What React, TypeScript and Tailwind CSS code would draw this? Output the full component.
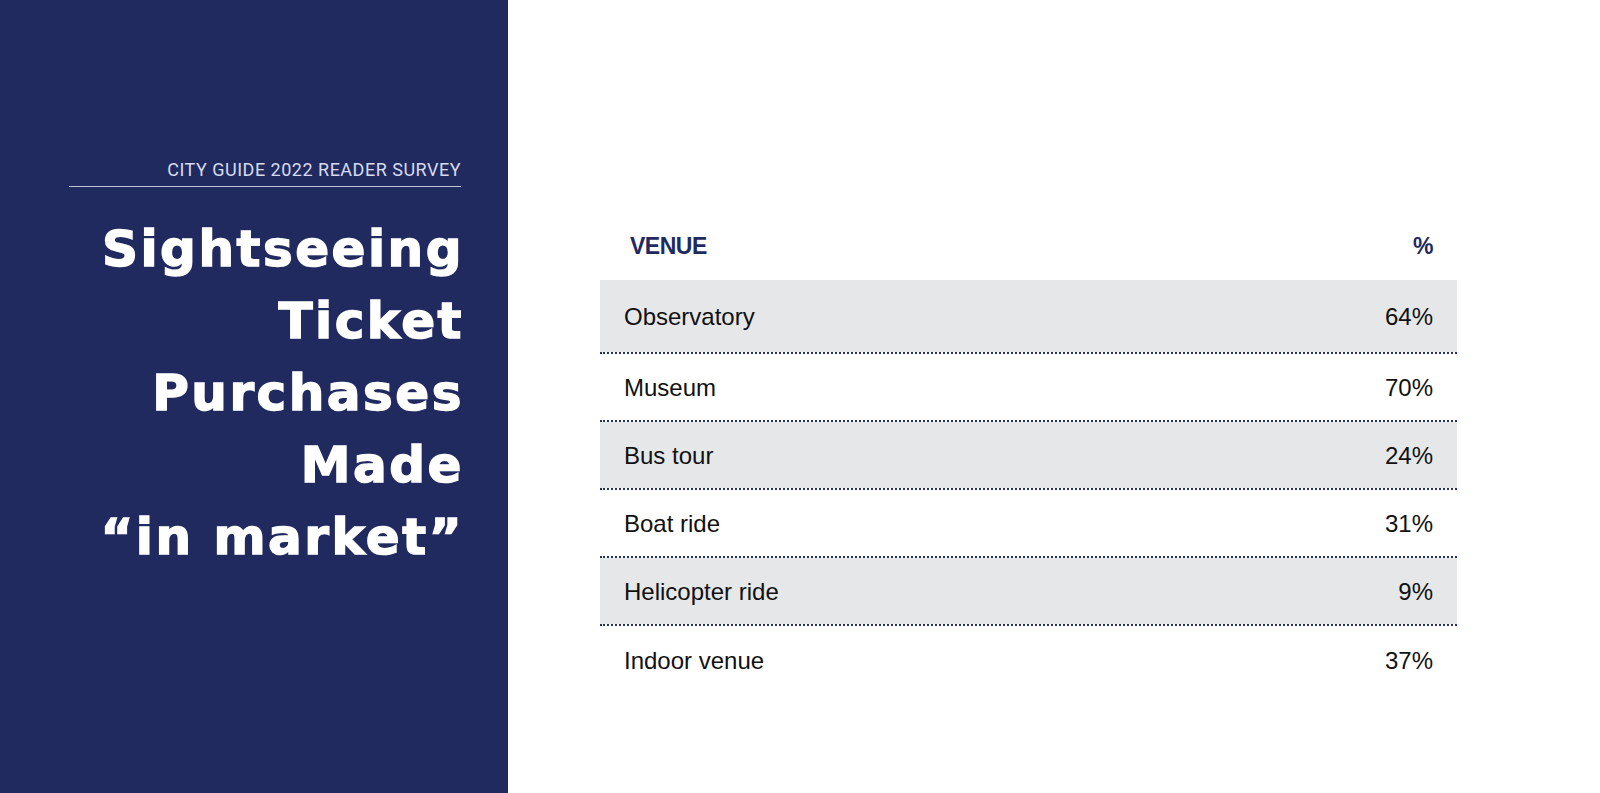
import React from "react";

const rows = [
  { venue: "Observatory", pct: "64%", shaded: true },
  { venue: "Museum", pct: "70%", shaded: false },
  { venue: "Bus tour", pct: "24%", shaded: true },
  { venue: "Boat ride", pct: "31%", shaded: false },
  { venue: "Helicopter ride", pct: "9%", shaded: true },
  { venue: "Indoor venue", pct: "37%", shaded: false },
];

export default function App() {
  return (
    <div className="flex w-[1600px] h-[793px] bg-white overflow-hidden">
      <div className="w-[508px] h-full shrink-0 bg-[#212a5f] flex flex-col items-end pr-[47px] pt-[159px]">
        <div
          className="w-[392px] text-right text-[18px] leading-[22px] tracking-[0.5px] text-[#d6dbef] pb-[5px] border-b border-[#c0c4dc]"
          style={{ fontFamily: "Roboto, 'Liberation Sans', sans-serif" }}
        >
          CITY GUIDE 2022 READER SURVEY
        </div>
        <h1
          className="mt-[26px] mr-[-3px] text-right text-white text-[50px] leading-[72px] font-bold tracking-[2.5px] [-webkit-text-stroke:1.5px_white]"
          style={{ fontFamily: "'DejaVu Sans', Verdana, sans-serif" }}
        >
          Sightseeing
          <br />
          Ticket
          <br />
          Purchases
          <br />
          Made
          <br />
          “in market”
        </h1>
      </div>
      <div className="flex-1 pl-[92px] pt-[224px]">
        <div className="w-[857px]" style={{ fontFamily: "'Liberation Sans', Arial, sans-serif" }}>
          <div className="flex h-[56px] items-end justify-between pl-[30px] pr-6 pb-[21px] text-[23px] leading-[26px] font-bold text-[#1f2a60] tracking-[-0.5px]">
            <span>VENUE</span>
            <span>%</span>
          </div>
          {rows.map((r, i) => (
            <div
              key={r.venue}
              className={
                (i === 0 ? "h-[74px] " : "h-[68px] ") +
                (r.shaded ? "bg-[#e6e7e9] " : "bg-white ") +
                (i < rows.length - 1 ? "border-b-2 border-dotted border-[#232e6e] " : "") +
                "bg-clip-padding flex items-center justify-between px-6 pt-[2px] text-[24px] leading-[28px] text-[#111111]"
              }
            >
              <span>{r.venue}</span>
              <span>{r.pct}</span>
            </div>
          ))}
        </div>
      </div>
    </div>
  );
}
